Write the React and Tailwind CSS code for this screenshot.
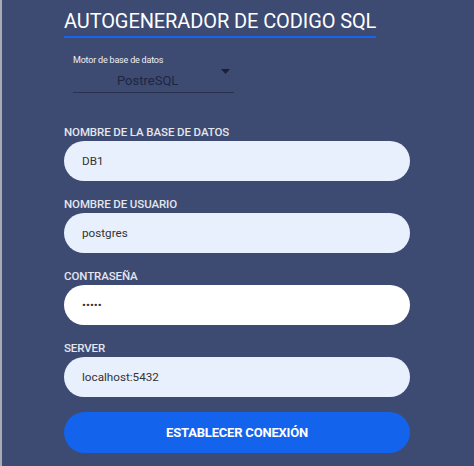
import { useState } from "react"

function Field({ label, value, type = "text", white = false }) {
    return (
        <div className="flex flex-col">
            <label className="text-[11.5px] leading-4 font-medium tracking-[-0.1px] text-[#e3e6ee] mb-px">
                {label}
            </label>
            <input
                type={type}
                defaultValue={value}
                className={`h-10 w-full rounded-full px-[18px] text-[11.7px] text-[#333] outline-none ${white ? "bg-white" : "bg-[#e8f0fe]"}`}
            />
        </div>
    )
}

export default function App() {
    const [motor, setMotor] = useState("PostreSQL")

    return (
        <div
            className="w-[474px] h-[466px] bg-[#3d4a72] border-l-2 border-[#a9abb2] overflow-hidden"
            style={{ fontFamily: "Roboto, 'Liberation Sans', sans-serif" }}
        >
            <div className="pl-[62px] w-[408px]">
                <div className="pt-[8px] inline-block">
                    <h1 className="text-[20px] leading-[27px] font-normal text-white tracking-[-0.1px]">
                        AUTOGENERADOR DE CODIGO SQL
                    </h1>
                    <div className="h-[2px] bg-[#1565f0] mt-[1px]" />
                </div>

                <div className="ml-[9px] mt-[16px] w-[161px]">
                    <div className="text-[9px] leading-3 text-[#eef0f5] tracking-[-0.2px]">
                        Motor de base de datos
                    </div>
                    <div className="relative flex items-end pb-[3px] h-[27px] border-b border-[#27304d]">
                        <span className="pl-[44px] text-[13px] leading-4 text-[#1f2640]">{motor}</span>
                        <svg className="absolute right-[4px] top-[3px]" width="9" height="5" viewBox="0 0 9 5">
                            <path d="M0 0h9L4.5 5z" fill="#1a2036" />
                        </svg>
                    </div>
                </div>

                <div className="mt-[31px] flex flex-col gap-[15px]">
                    <Field label="NOMBRE DE LA BASE DE DATOS" value="DB1" />
                    <Field label="NOMBRE DE USUARIO" value="postgres" />
                    <Field label="CONTRASEÑA" value="*****" type="password" white />
                    <Field label="SERVER" value="localhost:5432" />
                    <button
                        onClick={() => setMotor(motor)}
                        className="h-[41px] w-full rounded-full bg-[#1363ec] text-white text-[13px] font-bold tracking-[-0.2px]"
                    >
                        ESTABLECER CONEXIÓN
                    </button>
                </div>
            </div>
        </div>
    )
}
